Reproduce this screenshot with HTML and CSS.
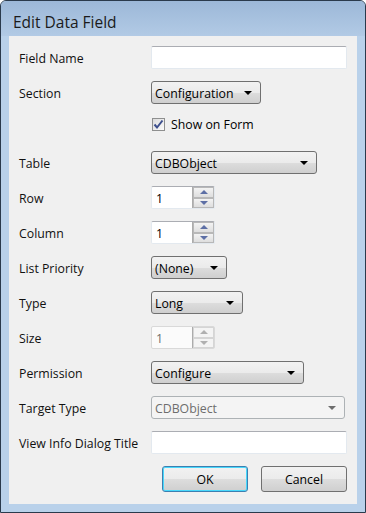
FILE: index.html
```html
<!DOCTYPE html>
<html lang="en">
<head>
    <meta charset="UTF-8">
    <meta name="viewport" content="width=device-width, initial-scale=1.0">
    <title>Edit Data Field</title>
    <link rel="stylesheet" href="styles.css">
</head>
<body>
    <div id="dialog">
        <div id="title-bar">Edit Data Field</div>
        <div id="client">
            <form class="field-grid">
                <label class="field-label">Field Name</label>
                <div class="textbox wide"></div>

                <label class="field-label">Section</label>
                <div class="combo" style="width: 110px"><span>Configuration</span><i class="arrow"></i></div>

                <span></span>
                <div class="check-row">
                    <span class="checkbox">
                        <svg width="11" height="11" viewBox="0 0 11 11"><path d="M1.5 5.5 L4 8.5 L9.5 1.5" fill="none" stroke="#3d4f8d" stroke-width="2"/></svg>
                    </span>
                    <span>Show on Form</span>
                </div>

                <label class="field-label">Table</label>
                <div class="combo" style="width: 166px"><span>CDBObject</span><i class="arrow"></i></div>

                <label class="field-label">Row</label>
                <div class="spin"><span class="spin-value">1</span><span class="spin-buttons"><b class="up"></b><b class="down"></b></span></div>

                <label class="field-label">Column</label>
                <div class="spin"><span class="spin-value">1</span><span class="spin-buttons"><b class="up"></b><b class="down"></b></span></div>

                <label class="field-label">List Priority</label>
                <div class="combo" style="width: 76px"><span>(None)</span><i class="arrow"></i></div>

                <label class="field-label">Type</label>
                <div class="combo" style="width: 92px"><span>Long</span><i class="arrow"></i></div>

                <label class="field-label">Size</label>
                <div class="spin disabled"><span class="spin-value">1</span><span class="spin-buttons"><b class="up"></b><b class="down"></b></span></div>

                <label class="field-label">Permission</label>
                <div class="combo" style="width: 153px"><span>Configure</span><i class="arrow"></i></div>

                <label class="field-label">Target Type</label>
                <div class="combo disabled" style="width: 194px"><span>CDBObject</span><i class="arrow"></i></div>

                <label class="field-label">View Info Dialog Title</label>
                <div class="textbox wide"></div>
            </form>
            <div class="button-row">
                <button class="btn default">OK</button>
                <button class="btn">Cancel</button>
            </div>
        </div>
    </div>
</body>
</html>
```

FILE: styles.css
```css
body {
    margin: 0;
    padding: 0;
    font-family: "Open Sans", "Liberation Sans", sans-serif;
    font-size: 12.3px;
    color: #000;
    background: #fff;
}
#dialog {
    width: 364px;
    height: 511px;
    border: 1px solid #2a3a4c;
    border-radius: 6px 6px 0 0;
    background: #b9d1ea;
    display: flex;
    flex-direction: column;
}
#title-bar {
    height: 35px;
    box-sizing: border-box;
    padding: 10px 0 0 12px;
    font-size: 15.5px;
    color: #1b1b1b;
    background: linear-gradient(#9cb8d8, #b2cae5);
    border-radius: 5px 5px 0 0;
}
#client {
    margin: 0 8px 8px 8px;
    flex-grow: 1;
    background: #f0f0f0;
    padding: 10px 0 0 10px;
}
.field-grid {
    display: grid;
    grid-template-columns: 132px 1fr;
    grid-auto-rows: 23px;
    row-gap: 12px;
    align-items: center;
    margin: 0;
}
.field-label {
    white-space: nowrap;
    padding-top: 2px;
    color: #111;
}
.textbox {
    height: 23px;
    box-sizing: border-box;
    background: #fff;
    border: 1px solid #e3e9ef;
    border-top-color: #abadb3;
    border-radius: 2px;
}
.textbox.wide { width: 196px; }
.combo {
    height: 23px;
    box-sizing: border-box;
    border: 1px solid #707070;
    border-radius: 3px;
    background: linear-gradient(#f2f2f2 0%, #ebebeb 50%, #dddddd 51%, #cfcfcf 100%);
    display: flex;
    align-items: center;
    justify-content: space-between;
    padding: 1px 8px 0 3px;
}
.combo .arrow {
    width: 0;
    height: 0;
    border-left: 4px solid transparent;
    border-right: 4px solid transparent;
    border-top: 4px solid #000;
}
.combo.disabled {
    background: #f4f4f4;
    border-color: #adb2b5;
    color: #6d6d6d;
}
.combo.disabled .arrow { border-top-color: #6d6d6d; }
.check-row {
    display: flex;
    align-items: center;
    gap: 6px;
    align-self: start;
    padding-left: 1px;
}
.checkbox {
    width: 11px;
    height: 11px;
    border: 1px solid #8e8f8f;
    background: linear-gradient(135deg, #dcdcdc, #fbfbfb);
    display: flex;
}
.spin {
    width: 64px;
    height: 23px;
    box-sizing: border-box;
    display: flex;
    background: #fff;
    border: 1px solid #e3e9ef;
    border-top-color: #abadb3;
    border-radius: 2px;
}
.spin-value {
    flex-grow: 1;
    padding: 1px 0 0 4px;
    line-height: 21px;
}
.spin-buttons {
    width: 21px;
    display: flex;
    flex-direction: column;
    border-left: 1px solid #acacac;
}
.spin-buttons b {
    flex: 1;
    border: 1px solid #b8b8b8;
    background: linear-gradient(#f3f3f3, #dedede);
    display: flex;
    align-items: center;
    justify-content: center;
}
.spin-buttons b::after {
    content: "";
    border-left: 4px solid transparent;
    border-right: 4px solid transparent;
}
.spin-buttons .up::after { border-bottom: 4px solid #5d6fa5; }
.spin-buttons .down::after { border-top: 4px solid #5d6fa5; }
.spin.disabled {
    background: #fbfbfb;
    border-color: #d9d9d9;
    color: #6d6d6d;
}
.spin.disabled .spin-buttons b { border-color: #d5d5d5; background: #f4f4f4; }
.spin.disabled .spin-buttons .up::after { border-bottom-color: #b0b0b0; }
.spin.disabled .spin-buttons .down::after { border-top-color: #b0b0b0; }
.button-row {
    display: flex;
    gap: 13px;
    margin: 12px 0 0 143px;
}
.btn {
    width: 86px;
    height: 26px;
    font: inherit;
    color: #000;
    border: 1px solid #707070;
    border-radius: 3px;
    background: linear-gradient(#f2f2f2 0%, #ebebeb 50%, #dddddd 51%, #cfcfcf 100%);
    padding: 0;
}
.btn.default {
    border-color: #3c7fb1;
    box-shadow: inset 0 0 0 1px #48d8fb;
}
```
